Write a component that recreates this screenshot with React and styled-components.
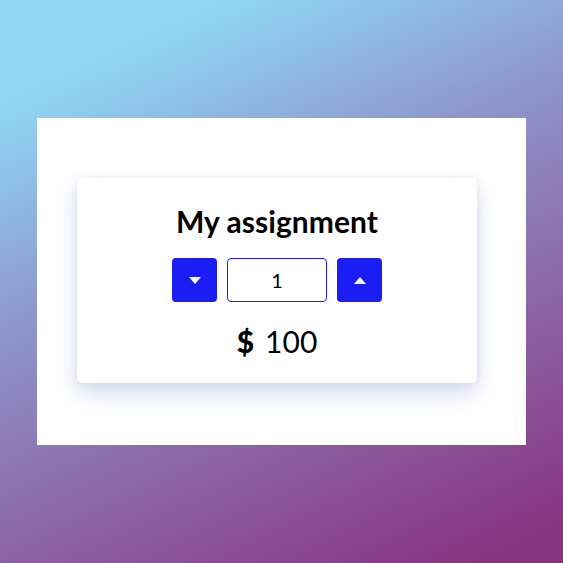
import React, { useState } from "react";
import styled, { createGlobalStyle } from "styled-components";

const GlobalStyle = createGlobalStyle`
  html, body {
    margin: 0;
    padding: 0;
  }
  body {
    font-family: Lato, "Liberation Sans", sans-serif;
    background: linear-gradient(155deg, #8fd9f6 12%, #8e97cc 40%, #8c5fa2 70%, #87357f 95%);
    min-height: 100vh;
  }
`;

const Page = styled.div`
  height: 100vh;
  display: flex;
  align-items: center;
  justify-content: center;
`;

const Panel = styled.div`
  background: #fff;
  width: 489px;
  box-sizing: border-box;
  padding: 60px 49px 62px 40px;
`;

const Card = styled.div`
  background: #fff;
  border-radius: 5px;
  box-shadow: 0 10px 22px rgba(120, 150, 210, 0.35), 0 0 6px rgba(180, 195, 230, 0.25);
  padding: 26px 0 24px;
  display: flex;
  flex-direction: column;
  align-items: center;
  gap: 20px;
`;

const Title = styled.h2`
  margin: 0;
  font-size: 30px;
  font-weight: 700;
  color: #000;
  line-height: 34px;
  letter-spacing: 0.05px;
`;

const Stepper = styled.div`
  display: flex;
  gap: 10px;
`;

const StepButton = styled.button`
  width: 45px;
  height: 44px;
  border: none;
  border-radius: 4px;
  background: #1a1ef5;
  display: flex;
  align-items: center;
  justify-content: center;
  padding: 0;
  cursor: pointer;
`;

const Count = styled.input`
  width: 100px;
  height: 44px;
  box-sizing: border-box;
  border: 1px solid #1a1ef5;
  border-radius: 4px;
  text-align: center;
  font-family: Lato, "Liberation Sans", sans-serif;
  font-size: 20px;
  color: #000;
  outline: none;
`;

const Price = styled.div`
  font-size: 30px;
  color: #000;
  line-height: normal;
  display: flex;
  gap: 11px;
  margin-top: 1px;

  .sign {
    font-weight: 900;
  }
`;

const Caret = ({ up }) => (
  <svg width="12" height="7" viewBox="0 0 12 7">
    <path d={up ? "M0 7 L6 0 L12 7 Z" : "M0 0 L6 7 L12 0 Z"} fill="#fff" />
  </svg>
);

const App = () => {
  const [count, setCount] = useState(1);

  return (
    <Page>
      <GlobalStyle />
      <Panel>
        <Card>
          <Title>My assignment</Title>
          <Stepper>
            <StepButton onClick={() => setCount(Math.max(0, count - 1))}>
              <Caret />
            </StepButton>
            <Count type="text" value={count} readOnly />
            <StepButton onClick={() => setCount(count + 1)}>
              <Caret up />
            </StepButton>
          </Stepper>
          <Price>
            <span className="sign">$</span>
            <span>{count * 100}</span>
          </Price>
        </Card>
      </Panel>
    </Page>
  );
};

export default App;
